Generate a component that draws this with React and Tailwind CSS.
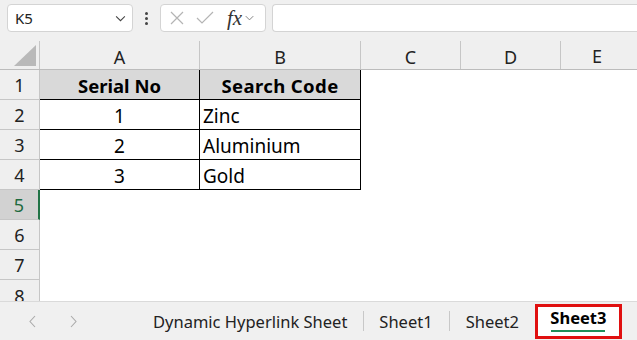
import React from 'react';

const font = { fontFamily: '"Noto Sans", "Open Sans", sans-serif' };

const cols = [
  { key: 'A', w: 'w-[160px]' },
  { key: 'B', w: 'w-[161px]' },
  { key: 'C', w: 'w-[100px]' },
  { key: 'D', w: 'w-[100px]' },
];

const data = [
  { n: '1', code: 'Zinc' },
  { n: '2', code: 'Aluminium' },
  { n: '3', code: 'Gold' },
];

const Chevron = ({ className }) => (
  <svg className={className} viewBox="0 0 12 8" fill="none" stroke="currentColor" strokeWidth="1.2">
    <path d="M1 1.5 L6 6.5 L11 1.5" />
  </svg>
);

const RowHead = ({ n, active, h = 'h-[30px]' }) => (
  <div
    className={`w-[40px] shrink-0 ${h} flex items-center justify-center pt-[2px] text-[18px] border-b border-r ${
      active
        ? 'bg-[#d2d2d2] text-[#1e6b3f] border-b-[#c6c6c6] border-r-2 border-r-[#217346]'
        : 'bg-[#efefef] text-[#222] border-[#c6c6c6]'
    }`}
  >
    {n}
  </div>
);

export default function App() {
  return (
    <div className="w-[637px] h-[340px] overflow-hidden bg-white flex flex-col" style={font}>
      {/* formula bar */}
      <div className="h-[40px] bg-[#f0f0f0] flex items-start pt-[4px] pl-[7px]">
        <div className="w-[126px] h-[28px] bg-white border border-[#d4d4d4] rounded-[4px] flex items-center justify-between pl-[7px] pr-[6px]">
          <span className="text-[15px] text-[#222]">K5</span>
          <Chevron className="w-[11px] h-[7px] text-[#444]" />
        </div>
        <div className="w-[27px] h-[28px] flex flex-col items-center justify-center gap-[2px]">
          <span className="w-[3px] h-[3px] bg-[#444] rounded-full" />
          <span className="w-[3px] h-[3px] bg-[#444] rounded-full" />
          <span className="w-[3px] h-[3px] bg-[#444] rounded-full" />
        </div>
        <div className="w-[106px] h-[28px] bg-white border border-[#d4d4d4] rounded-[4px] flex items-center pl-[8px] pr-[4px]">
          <svg className="w-[16px] h-[16px] text-[#b4b4b4]" viewBox="0 0 16 16" fill="none" stroke="currentColor" strokeWidth="1.2">
            <path d="M2 2 L14 14 M14 2 L2 14" />
          </svg>
          <svg className="w-[18px] h-[16px] ml-[11px] text-[#b4b4b4]" viewBox="0 0 18 16" fill="none" stroke="currentColor" strokeWidth="1.2">
            <path d="M1 8 L6 13 L17 2" />
          </svg>
          <span className="ml-[13px] text-[21px] italic text-[#333] leading-none" style={{ fontFamily: '"Liberation Serif", serif' }}>
            fx
          </span>
          <Chevron className="ml-[3px] w-[9px] h-[6px] text-[#777]" />
        </div>
        <div className="ml-[6px] flex-1 h-[28px] bg-white border border-[#d4d4d4] rounded-l-[4px] border-r-0" />
      </div>

      {/* column headers */}
      <div className="h-[30px] flex bg-[#efefef] border-b border-[#bcbcbc]">
        <div className="w-[40px] shrink-0 border-r border-[#c6c6c6] flex items-end justify-end pr-[3px] pb-[3px] mt-[1px]">
          <svg className="w-[22px] h-[21px]" viewBox="0 0 22 21">
            <path d="M22 0 L22 21 L0 21 Z" fill="#b9b9b9" />
          </svg>
        </div>
        {cols.map((c) => (
          <div key={c.key} className={`${c.w} shrink-0 flex items-center justify-center pt-[4px] text-[18px] text-[#222] border-r border-[#c6c6c6] mt-[1px]`}>
            {c.key}
          </div>
        ))}
        <div className="flex-1 flex items-center justify-center pt-[4px] text-[18px] text-[#222] pr-[4px]">E</div>
      </div>

      {/* header row of table */}
      <div className="flex">
        <RowHead n="1" />
        <div className="w-[160px] h-[30px] bg-[#d9d9d9] border-r border-b border-black flex items-center justify-center pt-[3px] text-[18.5px] font-bold text-black">
          Serial No
        </div>
        <div className="w-[161px] h-[30px] bg-[#d9d9d9] border-r border-b border-black flex items-center justify-center pt-[3px] text-[18.5px] font-bold text-black tracking-[0.4px]">
          Search Code
        </div>
      </div>

      {data.map((r, i) => (
        <div key={r.n} className="flex">
          <RowHead n={String(i + 2)} />
          <div className="w-[160px] h-[30px] border-r border-b border-black flex items-center justify-center pt-[3px] text-[19px] text-black">
            {r.n}
          </div>
          <div className="w-[161px] h-[30px] border-r border-b border-black flex items-center pl-[3px] pt-[3px] text-[19px] text-black">
            {r.code}
          </div>
        </div>
      ))}

      <div className="flex">
        <RowHead n="5" active />
      </div>
      <div className="flex">
        <RowHead n="6" />
      </div>
      <div className="flex">
        <RowHead n="7" />
      </div>
      <div className="flex h-[21px] overflow-hidden">
        <div className="w-[40px] shrink-0 h-[30px] bg-[#efefef] border-r border-[#c6c6c6] flex items-center justify-center pt-[2px] text-[18px] text-[#222]">
          8
        </div>
      </div>

      {/* sheet tabs */}
      <div className="flex-1 bg-[#f0f0f0] border-t border-[#dadada] flex items-center text-[16.5px] text-[#222]">
        <svg className="ml-[29px] w-[7px] h-[13px] text-[#aaa]" viewBox="0 0 7 13" fill="none" stroke="currentColor" strokeWidth="1.1">
          <path d="M6 1 L1 6.5 L6 12" />
        </svg>
        <svg className="ml-[34px] w-[7px] h-[13px] text-[#aaa]" viewBox="0 0 7 13" fill="none" stroke="currentColor" strokeWidth="1.1">
          <path d="M1 1 L6 6.5 L1 12" />
        </svg>
        <span className="ml-[76px] pt-[2px]">Dynamic Hyperlink Sheet</span>
        <span className="ml-[16px] w-px h-[20px] bg-[#c8c8c8]" />
        <span className="ml-[15px] pt-[2px]">Sheet1</span>
        <span className="ml-[16px] w-px h-[20px] bg-[#c8c8c8]" />
        <span className="ml-[16px] pt-[2px]">Sheet2</span>
        <div className="ml-[16px] w-[87px] h-[35px] border-[3px] border-[#e01010] bg-white flex flex-col items-center justify-center">
          <span className="font-bold text-black leading-none mb-[3px]">Sheet3</span>
          <span className="w-[54px] h-[2px] bg-[#1f8f5a]" />
        </div>
      </div>
    </div>
  );
}
